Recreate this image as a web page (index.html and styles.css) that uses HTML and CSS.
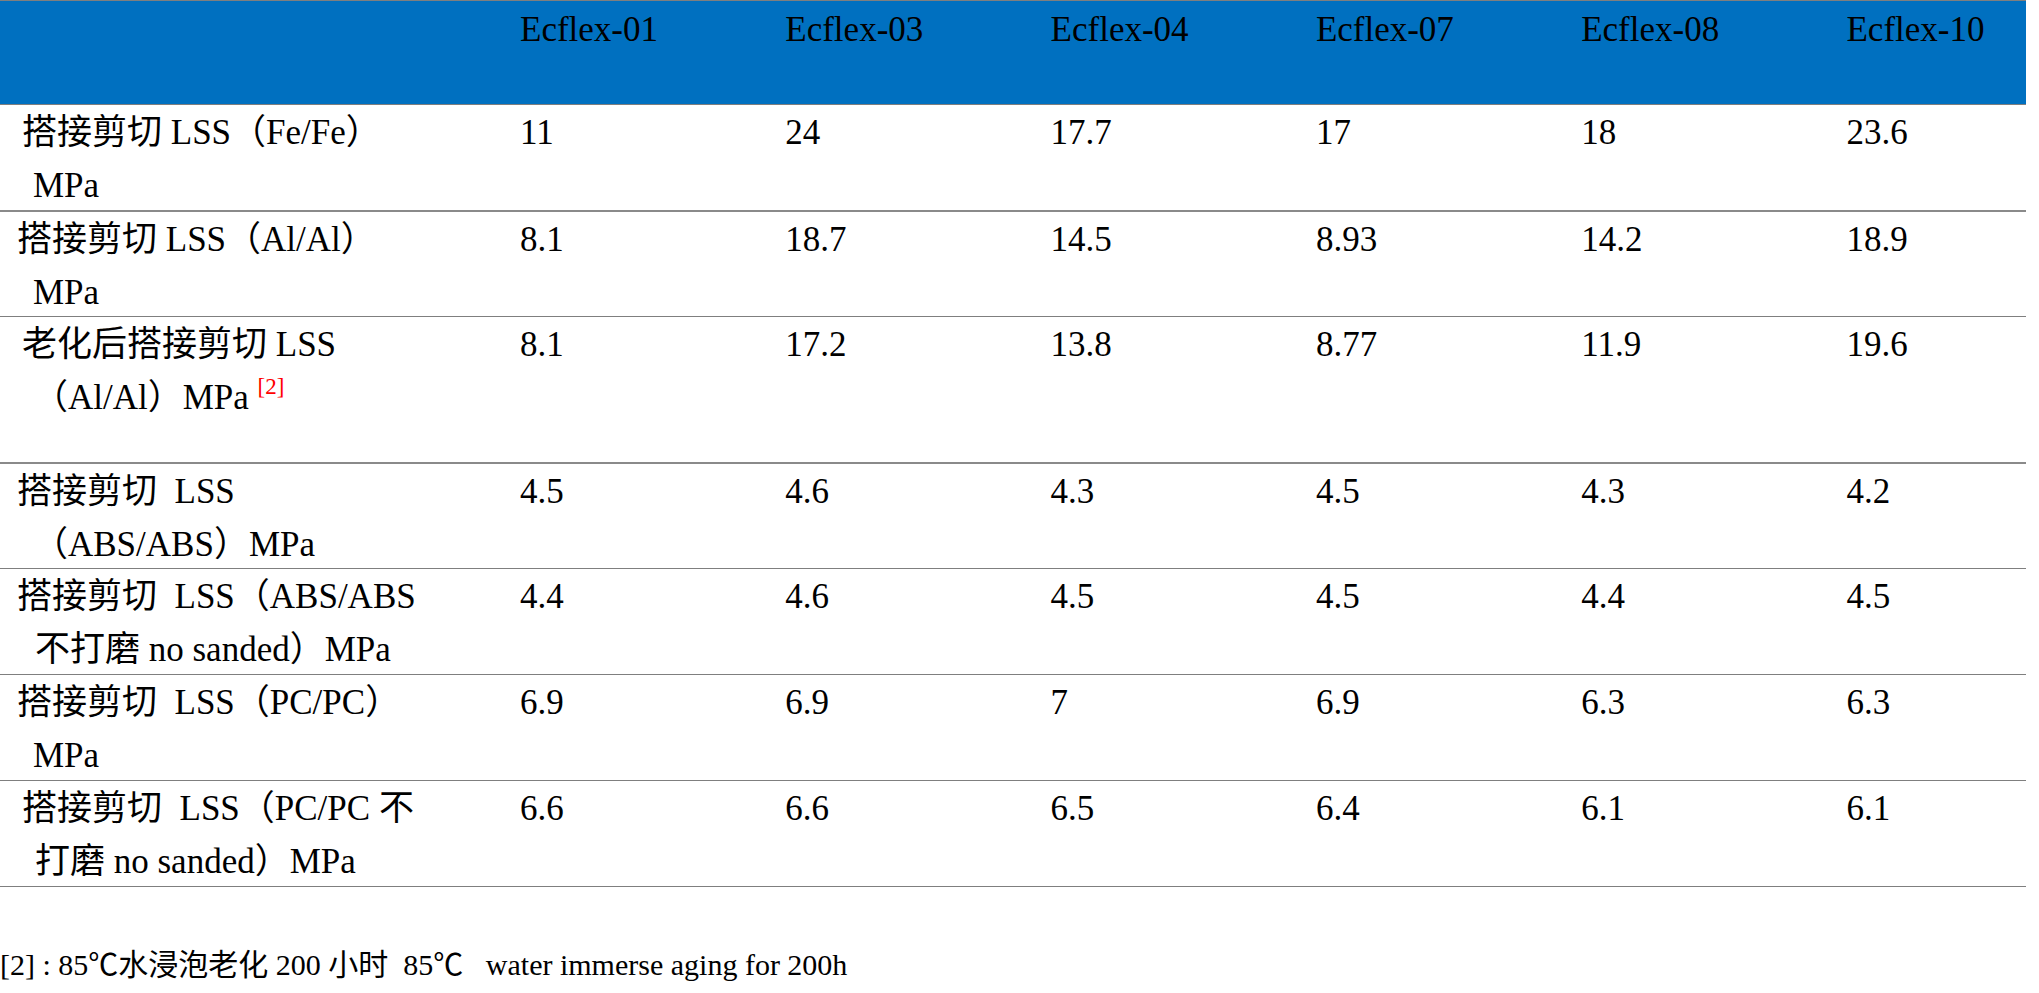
FILE: index.html
```html
<!DOCTYPE html>
<html lang="zh">
<head>
<meta charset="utf-8">
<title>Ecflex LSS</title>
<link rel="stylesheet" href="styles.css">
</head>
<body>
<div class="table">
  <div class="row head">
    <div class="cell label"></div>
    <div class="cell">Ecflex-01</div>
    <div class="cell">Ecflex-03</div>
    <div class="cell">Ecflex-04</div>
    <div class="cell">Ecflex-07</div>
    <div class="cell">Ecflex-08</div>
    <div class="cell">Ecflex-10</div>
  </div>
  <div class="row">
    <div class="cell label"><div class="l1 in">搭接剪切 LSS（Fe/Fe）</div><div class="l2">MPa</div></div>
    <div class="cell">11</div>
    <div class="cell">24</div>
    <div class="cell">17.7</div>
    <div class="cell">17</div>
    <div class="cell">18</div>
    <div class="cell">23.6</div>
  </div>
  <div class="row thick">
    <div class="cell label"><div class="l1">搭接剪切 LSS（Al/Al）</div><div class="l2">MPa</div></div>
    <div class="cell">8.1</div>
    <div class="cell">18.7</div>
    <div class="cell">14.5</div>
    <div class="cell">8.93</div>
    <div class="cell">14.2</div>
    <div class="cell">18.9</div>
  </div>
  <div class="row tall">
    <div class="cell label"><div class="l1 in">老化后搭接剪切 LSS</div><div class="l2">（Al/Al）MPa <sup class="ref">[2]</sup></div></div>
    <div class="cell">8.1</div>
    <div class="cell">17.2</div>
    <div class="cell">13.8</div>
    <div class="cell">8.77</div>
    <div class="cell">11.9</div>
    <div class="cell">19.6</div>
  </div>
  <div class="row thick">
    <div class="cell label"><div class="l1">搭接剪切&nbsp; LSS</div><div class="l2">（ABS/ABS）MPa</div></div>
    <div class="cell">4.5</div>
    <div class="cell">4.6</div>
    <div class="cell">4.3</div>
    <div class="cell">4.5</div>
    <div class="cell">4.3</div>
    <div class="cell">4.2</div>
  </div>
  <div class="row">
    <div class="cell label"><div class="l1">搭接剪切&nbsp; LSS（ABS/ABS</div><div class="l2 wide">不打磨 no sanded）MPa</div></div>
    <div class="cell">4.4</div>
    <div class="cell">4.6</div>
    <div class="cell">4.5</div>
    <div class="cell">4.5</div>
    <div class="cell">4.4</div>
    <div class="cell">4.5</div>
  </div>
  <div class="row">
    <div class="cell label"><div class="l1">搭接剪切&nbsp; LSS（PC/PC）</div><div class="l2">MPa</div></div>
    <div class="cell">6.9</div>
    <div class="cell">6.9</div>
    <div class="cell">7</div>
    <div class="cell">6.9</div>
    <div class="cell">6.3</div>
    <div class="cell">6.3</div>
  </div>
  <div class="row">
    <div class="cell label"><div class="l1 in">搭接剪切&nbsp; LSS（PC/PC 不</div><div class="l2 wide">打磨 no sanded）MPa</div></div>
    <div class="cell">6.6</div>
    <div class="cell">6.6</div>
    <div class="cell">6.5</div>
    <div class="cell">6.4</div>
    <div class="cell">6.1</div>
    <div class="cell">6.1</div>
  </div>
</div>
<p class="note">[2] : 85℃水浸泡老化 200 小时  85℃   water immerse aging for 200h</p>
</body>
</html>
```

FILE: styles.css
```css
html, body {
  margin: 0;
  padding: 0;
  background: #ffffff;
}

body {
  font-family: "Liberation Serif", "Noto Sans CJK SC", serif;
  color: #000000;
}

.table {
  width: 2026px;
  border-bottom: 1px solid #7f7f7f;
}

.row {
  display: grid;
  grid-template-columns: 520px repeat(5, 265.3px) 1fr;
  box-sizing: border-box;
  height: 106px;
  border-top: 1px solid #7f7f7f;
  padding-top: 1px;
  font-size: 35px;
  line-height: 53px;
}

.row.head {
  height: 104px;
  padding-top: 2px;
  background: #0070c0;
}

.row.thick {
  border-top: 2px solid #8a8a8a;
}

.row.tall {
  height: 146px;
}

.cell {
  white-space: nowrap;
}

.label {
  padding-left: 17px;
}

.l1.in {
  padding-left: 5px;
}

.l2 {
  padding-left: 16px;
}

.l2.wide {
  padding-left: 18px;
}

.ref {
  font-size: 23px;
  line-height: 0;
  vertical-align: 15px;
  color: #ff0000;
}

.note {
  margin: 55px 0 0 0;
  font-family: "Liberation Serif", "Noto Sans CJK SC", serif;
  font-size: 30px;
  line-height: 45px;
  white-space: pre;
}
```
